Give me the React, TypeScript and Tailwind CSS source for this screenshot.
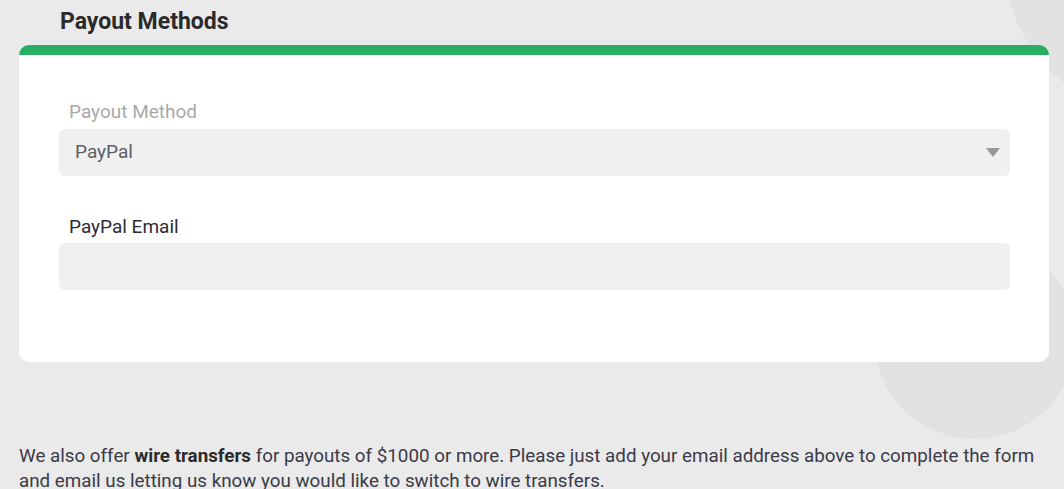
export default function App() {
  return (
    <div className="relative h-[489px] w-[1064px] overflow-hidden bg-[#eaeaea] font-['Roboto',sans-serif]">
      {/* decorative background circles */}
      <div className="absolute left-[1004px] top-[-196px] h-[312px] w-[312px] rounded-full bg-[#e2e2e2]" />
      <div className="absolute left-[874px] top-[237px] h-[202px] w-[202px] rounded-full bg-[#e2e2e2]" />

      <div className="relative px-[19px]">
        <h2 className="h-[45px] pl-[41px] pt-[7px] text-[23px] font-bold leading-[30px] text-[#2b2b2b]">
          Payout Methods
        </h2>

        <div className="w-[1030px] rounded-[10px] border-t-[10px] border-[#27ae60] bg-white px-[40px] pb-[72px] pt-[45px]">
          <label className="mb-[5px] block pl-[10px] text-[19px] leading-[24px] text-[#a9a9a9]">
            Payout Method
          </label>
          <div className="flex h-[47px] w-[951px] items-center justify-between rounded-[6px] bg-[#f0f0f0] pl-[16px] pr-[10px]">
            <span className="text-[19px] text-[#5b5f66]">PayPal</span>
            <svg width="14" height="9" viewBox="0 0 14 9">
              <path d="M0 0 L14 0 L7 9 Z" fill="#999999" />
            </svg>
          </div>

          <label className="mb-[4px] mt-[39px] block pl-[10px] text-[19px] leading-[24px] text-[#2c2c36]">
            PayPal Email
          </label>
          <input
            type="email"
            className="block h-[47px] w-[951px] rounded-[6px] bg-[#f0f0f0] px-[16px] text-[19px] outline-none"
          />
        </div>

        <p className="mt-[82px] text-[18.8px] leading-[25px] text-[#3a3a48]">
          We also offer <b className="font-bold text-[#2b2b2b]">wire transfers</b> for payouts of $1000 or more. Please just add your email address above to complete the form and email us letting us know you would like to switch to wire transfers.
        </p>
      </div>
    </div>
  )
}
